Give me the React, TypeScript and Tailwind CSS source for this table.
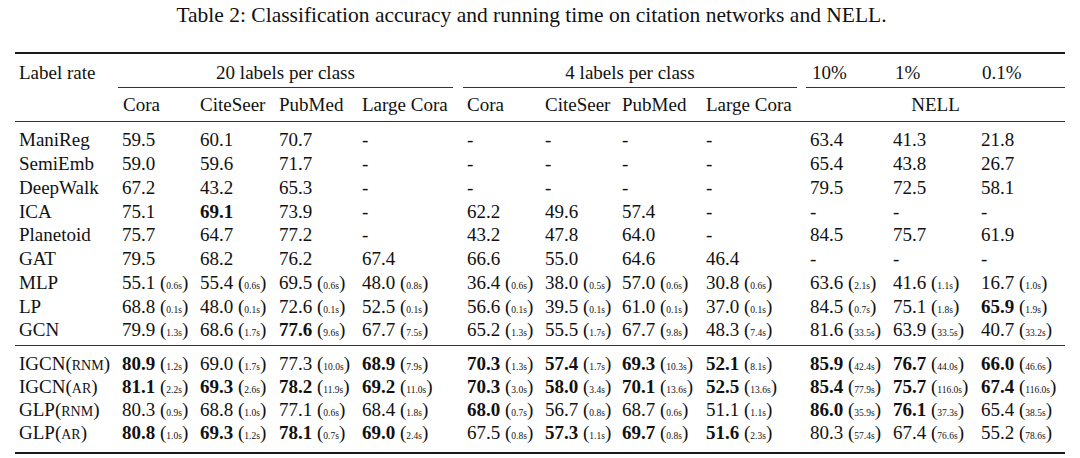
import type { ReactNode } from 'react'

// one grid template for every row, so the columns line up
const cols =
  'grid grid-cols-[103px_78px_79px_83px_105px_78px_77px_84px_104px_83px_88px_88px]'

// "*" = bold, "|" separates the running time
const top: Array<[ReactNode, string[]]> = [
  ['ManiReg', ['59.5', '60.1', '70.7', '-', '-', '-', '-', '-', '63.4', '41.3', '21.8']],
  ['SemiEmb', ['59.0', '59.6', '71.7', '-', '-', '-', '-', '-', '65.4', '43.8', '26.7']],
  ['DeepWalk', ['67.2', '43.2', '65.3', '-', '-', '-', '-', '-', '79.5', '72.5', '58.1']],
  ['ICA', ['75.1', '*69.1', '73.9', '-', '62.2', '49.6', '57.4', '-', '-', '-', '-']],
  ['Planetoid', ['75.7', '64.7', '77.2', '-', '43.2', '47.8', '64.0', '-', '84.5', '75.7', '61.9']],
  ['GAT', ['79.5', '68.2', '76.2', '67.4', '66.6', '55.0', '64.6', '46.4', '-', '-', '-']],
  ['MLP', ['55.1|0.6s', '55.4|0.6s', '69.5|0.6s', '48.0|0.8s', '36.4|0.6s', '38.0|0.5s', '57.0|0.6s', '30.8|0.6s', '63.6|2.1s', '41.6|1.1s', '16.7|1.0s']],
  ['LP', ['68.8|0.1s', '48.0|0.1s', '72.6|0.1s', '52.5|0.1s', '56.6|0.1s', '39.5|0.1s', '61.0|0.1s', '37.0|0.1s', '84.5|0.7s', '75.1|1.8s', '*65.9|1.9s']],
  ['GCN', ['79.9|1.3s', '68.6|1.7s', '*77.6|9.6s', '67.7|7.5s', '65.2|1.3s', '55.5|1.7s', '67.7|9.8s', '48.3|7.4s', '81.6|33.5s', '63.9|33.5s', '40.7|33.2s']],
]

function Method({ name, tag }: { name: string; tag: string }) {
  return (
    <>
      {name}(<span className="text-[14px]">{tag}</span>)
    </>
  )
}

const ours: Array<[ReactNode, string[]]> = [
  [<Method name="IGCN" tag="RNM" />, ['*80.9|1.2s', '69.0|1.7s', '77.3|10.0s', '*68.9|7.9s', '*70.3|1.3s', '*57.4|1.7s', '*69.3|10.3s', '*52.1|8.1s', '*85.9|42.4s', '*76.7|44.0s', '*66.0|46.6s']],
  [<Method name="IGCN" tag="AR" />, ['*81.1|2.2s', '*69.3|2.6s', '*78.2|11.9s', '*69.2|11.0s', '*70.3|3.0s', '*58.0|3.4s', '*70.1|13.6s', '*52.5|13.6s', '*85.4|77.9s', '*75.7|116.0s', '*67.4|116.0s']],
  [<Method name="GLP" tag="RNM" />, ['80.3|0.9s', '68.8|1.0s', '77.1|0.6s', '68.4|1.8s', '*68.0|0.7s', '56.7|0.8s', '68.7|0.6s', '51.1|1.1s', '*86.0|35.9s', '*76.1|37.3s', '65.4|38.5s']],
  [<Method name="GLP" tag="AR" />, ['*80.8|1.0s', '*69.3|1.2s', '*78.1|0.7s', '*69.0|2.4s', '67.5|0.8s', '*57.3|1.1s', '*69.7|0.8s', '*51.6|2.3s', '80.3|57.4s', '67.4|76.6s', '55.2|78.6s']],
]

function Cell({ raw }: { raw: string }) {
  const bold = raw.startsWith('*')
  const [value, time] = (bold ? raw.slice(1) : raw).split('|')
  return (
    <div className="pl-1 whitespace-nowrap">
      <span className={bold ? 'font-bold' : ''}>{value}</span>
      {time && (
        <>
          {' '}(<span className="text-[9.5px]">{time}</span>)
        </>
      )}
    </div>
  )
}

function Rows({ rows, h }: { rows: Array<[ReactNode, string[]]>; h: string }) {
  return (
    <>
      {rows.map(([label, cells], i) => (
        <div key={i} className={`${cols} ${h} items-center`}>
          <div className="pl-1 whitespace-nowrap">{label}</div>
          {cells.map((c, j) => (
            <Cell key={j} raw={c} />
          ))}
        </div>
      ))}
    </>
  )
}

export default function App() {
  return (
    <div className="w-[1080px] h-[458px] bg-white text-[#111] font-['Liberation_Serif',serif] text-[19px] leading-none">
      <div className="h-[32px] flex items-center justify-center pr-[17px] text-[21.5px]">
        Table 2: Classification accuracy and running time on citation networks and NELL.
      </div>

      <div className="ml-[15px] w-[1050px] mt-[20px]">
        <div className="h-[2px] bg-[#1a1a1a]" />

        {/* header row 1 */}
        <div className={`${cols} h-[34px]`}>
          <div className="pl-1 pt-[3px] flex items-center">Label rate</div>
          <div className="col-span-4 pr-[10px] flex">
            <div className="flex-1 flex items-center justify-center pt-[3px] border-b border-[#333]">
              20 labels per class
            </div>
          </div>
          <div className="col-span-4 pr-[9px] flex">
            <div className="flex-1 flex items-center justify-center pt-[3px] border-b border-[#333]">
              4 labels per class
            </div>
          </div>
          <div className="col-span-3 flex border-b border-[#333] pt-[3px]">
            <div className="w-[83px] pl-[6px] flex items-center">10%</div>
            <div className="w-[88px] pl-[6px] flex items-center">1%</div>
            <div className="w-[88px] pl-[5px] flex items-center">0.1%</div>
          </div>
        </div>

        {/* header row 2 */}
        <div className={`${cols} h-[33px] items-center`}>
          <div />
          <div className="pl-[5px]">Cora</div>
          <div className="pl-1">CiteSeer</div>
          <div className="pl-1">PubMed</div>
          <div className="pl-1">Large Cora</div>
          <div className="pl-1">Cora</div>
          <div className="pl-1">CiteSeer</div>
          <div className="pl-1">PubMed</div>
          <div className="pl-1">Large Cora</div>
          <div className="col-span-3 text-center">NELL</div>
        </div>

        <div className="h-px bg-[#333]" />

        <div className="pt-[6px] pb-[3px]">
          <Rows rows={top} h="h-[23.75px]" />
        </div>

        <div className="h-px bg-[#333]" />

        <div className="pt-[6px] pb-[8px]">
          <Rows rows={ours} h="h-[23px]" />
        </div>

        <div className="h-[2px] bg-[#1a1a1a]" />
      </div>
    </div>
  )
}
